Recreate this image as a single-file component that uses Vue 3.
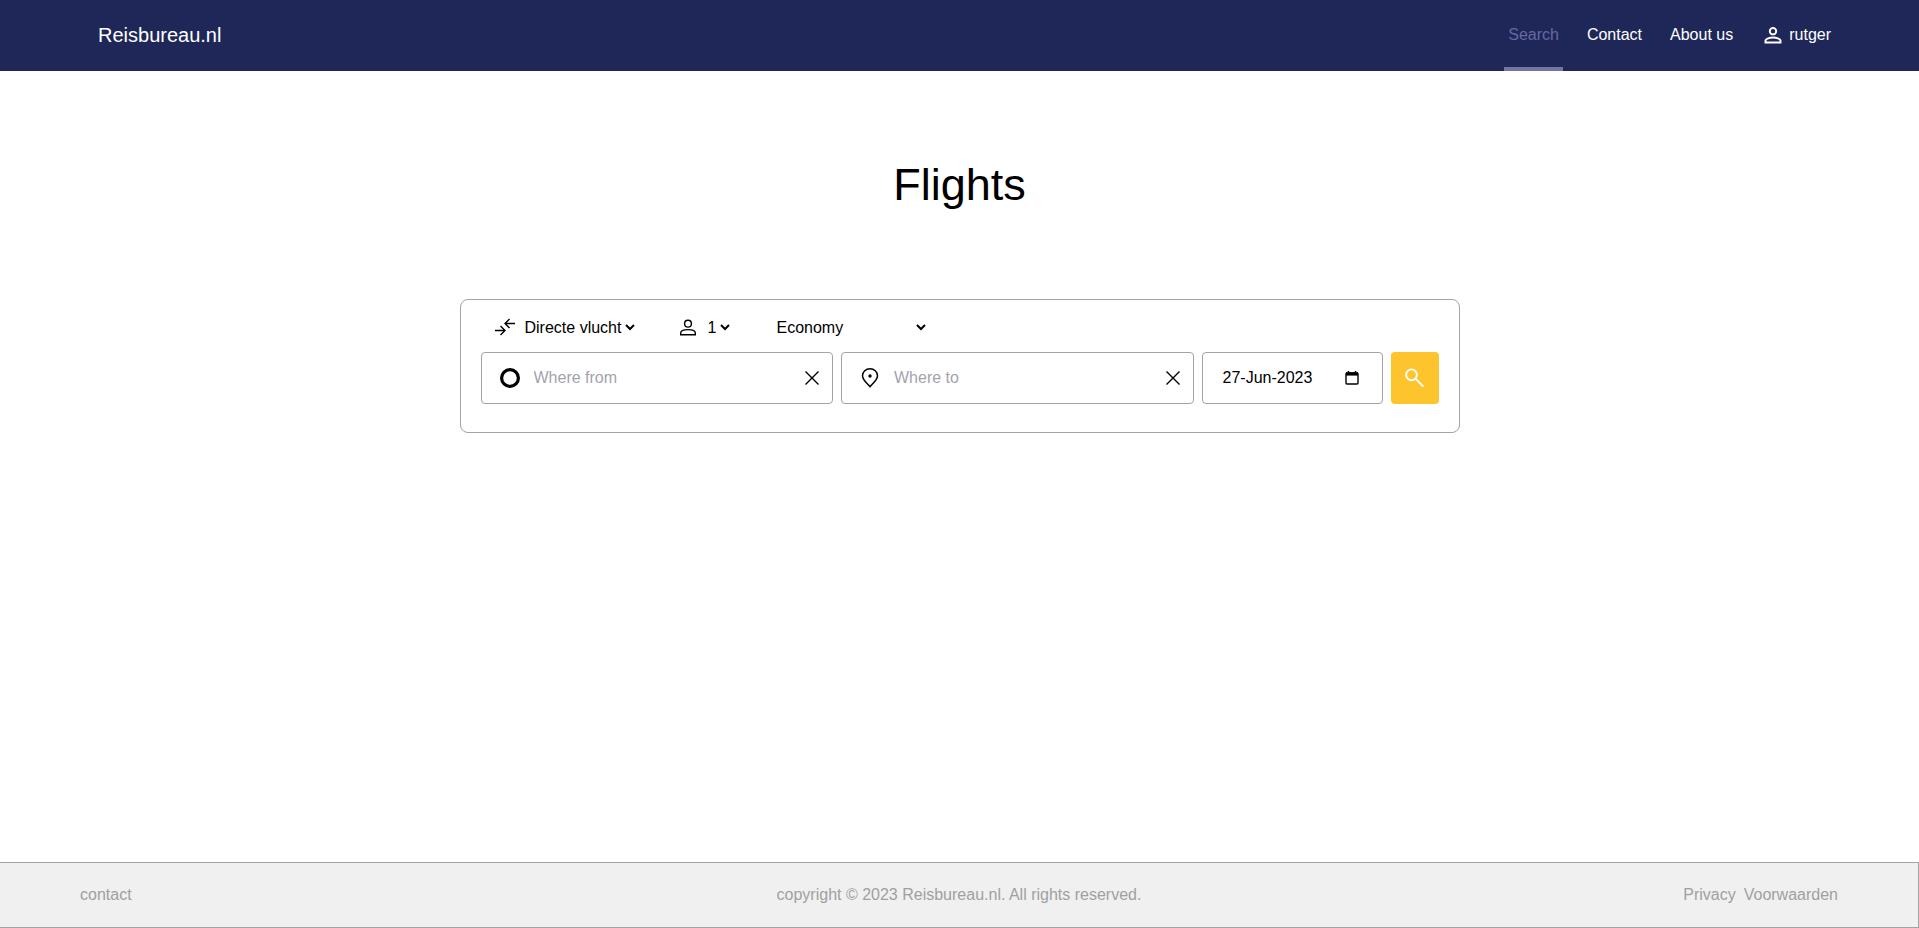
<template>
  <div class="page">
    <header class="header">
      <a class="brand" href="#">Reisbureau.nl</a>
      <nav class="nav">
        <a
          v-for="link in links"
          :key="link"
          href="#"
          class="nav-link"
          :class="{ active: link === activeLink }"
          @click.prevent="activeLink = link"
        >{{ link }}</a>
        <a href="#" class="nav-link user">
          <svg viewBox="0 0 24 24" width="24" height="24" fill="none" stroke="currentColor" stroke-width="1.9" aria-hidden="true">
            <circle cx="12" cy="8.2" r="3.2" />
            <path d="M4.500 19.500v-1.700c0-2.300 4.500-3.300 7.500-3.300s7.500 1 7.500 3.300v1.700z" />
          </svg>
          <span>rutger</span>
        </a>
      </nav>
    </header>

    <main class="main">
      <h1>Flights</h1>

      <form class="search-card" @submit.prevent>
        <div class="options">
          <div class="option">
            <svg viewBox="0 0 24 24" width="24" height="24" fill="none" stroke="currentColor" stroke-width="1.4" aria-hidden="true">
              <path d="M2 15.500h9.500M7.500 11l4.500 4.500-4.500 4.500" />
              <path d="M22 8.500h-9.500M16.500 4l-4.500 4.500 4.500 4.500" />
            </svg>
            <select v-model="flightType" aria-label="Flight type">
              <option>Directe vlucht</option>
              <option>Alle vluchten</option>
            </select>
          </div>
          <div class="option">
            <svg viewBox="0 0 24 24" width="24" height="24" fill="none" stroke="currentColor" stroke-width="1.4" aria-hidden="true">
              <circle cx="12" cy="8.700" r="3.400" />
              <path d="M4.700 19.800v-1.800c0-2.400 4.200-3.400 7.300-3.400s7.300 1 7.300 3.400v1.800z" />
            </svg>
            <select v-model="passengers" aria-label="Passengers">
              <option v-for="n in 9" :key="n" :value="n">{{ n }}</option>
            </select>
          </div>
          <select v-model="cabin" class="cabin" aria-label="Cabin class">
            <option>Economy</option>
            <option>Premium Economy</option>
            <option>Business</option>
            <option>First</option>
          </select>
        </div>

        <div class="fields">
          <div class="field">
            <svg viewBox="0 0 24 24" width="24" height="24" fill="none" stroke="currentColor" stroke-width="3.2" aria-hidden="true">
              <circle cx="12" cy="12" r="8.4" />
            </svg>
            <input v-model="from" type="text" placeholder="Where from" aria-label="Where from" />
            <button type="button" class="icon-btn" aria-label="Clear where from" @click="from = ''">
              <svg viewBox="0 0 24 24" width="24" height="24" fill="none" stroke="currentColor" stroke-width="1.4">
                <path d="M5.500 5.500l13 13M18.500 5.500l-13 13" />
              </svg>
            </button>
          </div>

          <div class="field">
            <svg viewBox="0 0 24 24" width="24" height="24" fill="none" stroke="currentColor" stroke-width="1.5" aria-hidden="true">
              <path d="M12 20.700c-1.500-2.300-7.500-6.200-7.500-10.900a7.500 7.100 0 0 1 15 0c0 4.700-6 8.600-7.500 10.900z" />
              <circle cx="12" cy="10" r="1.7" fill="currentColor" stroke="none" />
            </svg>
            <input v-model="to" type="text" placeholder="Where to" aria-label="Where to" />
            <button type="button" class="icon-btn" aria-label="Clear where to" @click="to = ''">
              <svg viewBox="0 0 24 24" width="24" height="24" fill="none" stroke="currentColor" stroke-width="1.4">
                <path d="M5.500 5.500l13 13M18.500 5.500l-13 13" />
              </svg>
            </button>
          </div>

          <div class="field date">
            <input v-model="date" type="text" aria-label="Departure date" />
            <button type="button" class="icon-btn" aria-label="Pick a date">
              <svg viewBox="0 0 24 24" width="24" height="24" fill="none" stroke="currentColor" aria-hidden="true">
                <rect x="6" y="7" width="12" height="11" rx="1" stroke-width="1.4" />
                <path d="M6 8h12" stroke-width="3.2" />
                <path d="M8.500 5v2M15.500 5v2" stroke-width="1.5" />
              </svg>
            </button>
          </div>

          <button type="submit" class="search-btn" aria-label="Search flights">
            <svg viewBox="0 0 24 24" width="24" height="24" fill="none" stroke="currentColor" stroke-width="1.9">
              <circle cx="8.5" cy="8.8" r="5.4" />
              <path d="M12.400 12.700l8 8" />
            </svg>
          </button>
        </div>
      </form>
    </main>

    <footer class="footer">
      <a href="#">contact</a>
      <span>copyright © 2023 Reisbureau.nl. All rights reserved.</span>
      <div class="footer-links">
        <a href="#">Privacy</a>
        <a href="#">Voorwaarden</a>
      </div>
    </footer>
  </div>
</template>

<script setup>
import { ref } from 'vue';

const links = ['Search', 'Contact', 'About us'];
const activeLink = ref('Search');

const flightType = ref('Directe vlucht');
const passengers = ref(1);
const cabin = ref('Economy');

const from = ref('');
const to = ref('');
const date = ref('27-Jun-2023');
</script>

<style>
body {
  margin: 0;
}
</style>

<style scoped>
.page {
  min-height: 100vh;
  display: flex;
  flex-direction: column;
  background: #fff;
  color: #000;
  font-family: "Liberation Sans", Arial, sans-serif;
  font-size: 16px;
  line-height: 24px;
}

.page *,
.page {
  box-sizing: border-box;
}

svg {
  display: block;
  flex-shrink: 0;
}

a {
  color: inherit;
  text-decoration: none;
}

.header {
  display: flex;
  justify-content: space-between;
  height: 71px;
  padding: 0 84px 0 98px;
  background: #1e2757;
  color: #fff;
}

.brand {
  display: flex;
  align-items: center;
  padding-bottom: 2px;
  font-size: 20px;
}

.nav {
  display: flex;
  gap: 20px;
}

.nav-link {
  display: flex;
  align-items: center;
  gap: 4px;
  padding: 2px 4px 0;
  border-bottom: 4px solid transparent;
}

.nav-link.active {
  color: #6668a3;
  border-bottom-color: #7375a8;
}

.main {
  flex: 1;
  display: flex;
  flex-direction: column;
  align-items: center;
  padding: 88px 20px;
}

h1 {
  margin: 0 0 88px;
  font-size: 45px;
  line-height: 52px;
  font-weight: 400;
}

.search-card {
  display: flex;
  flex-direction: column;
  gap: 13px;
  width: 100%;
  max-width: 1000px;
  padding: 15px 20px 28px;
  border: 1px solid #a3a3a6;
  border-radius: 8px;
}

.options {
  display: flex;
  align-items: center;
  gap: 38px;
  padding-left: 12px;
}

.option {
  display: flex;
  align-items: center;
  gap: 4px;
}

select {
  height: 24px;
  padding: 0;
  border: none;
  background: transparent;
  color: #000;
  font: inherit;
}

.cabin {
  width: 156px;
  margin-left: 2px;
}

.fields {
  display: flex;
  gap: 8px;
}

.field {
  flex: 1;
  min-width: 0;
  display: flex;
  align-items: center;
  gap: 12px;
  height: 52px;
  padding: 0 8px 0 16px;
  border: 1px solid #a3a3a6;
  border-radius: 4px;
}

.field input {
  flex: 1;
  min-width: 0;
  width: 0;
  padding: 0;
  border: none;
  outline: none;
  background: transparent;
  color: #000;
  font: inherit;
}

.field input::placeholder {
  color: #a3a3ad;
  opacity: 1;
}

.field.date {
  flex: 0 0 181px;
  padding: 0 18px 0 20px;
}

.icon-btn {
  padding: 0;
  border: none;
  background: none;
  color: #000;
  cursor: pointer;
}

.search-btn {
  display: flex;
  align-items: center;
  justify-content: center;
  width: 48px;
  padding: 0;
  border: none;
  border-radius: 4px;
  background: #fec42e;
  color: #fff;
  cursor: pointer;
}

.footer {
  display: grid;
  grid-template-columns: 1fr auto 1fr;
  align-items: center;
  height: 66px;
  padding: 0 80px;
  border: 1px solid #a3a3a3;
  border-left: none;
  background: #f0f0f0;
  color: #a0a0a0;
}

.footer-links {
  display: flex;
  justify-content: flex-end;
  gap: 8px;
}
</style>
